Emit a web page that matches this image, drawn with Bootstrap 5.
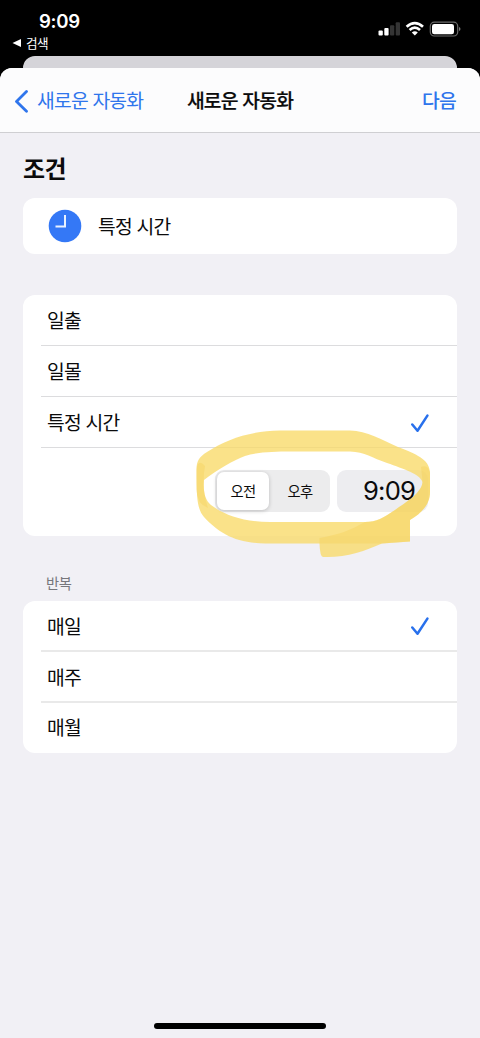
<!DOCTYPE html>
<html lang="ko">
<head>
<meta charset="utf-8">
<meta name="viewport" content="width=device-width, initial-scale=1">
<title>새로운 자동화</title>
<link href="https://cdn.jsdelivr.net/npm/bootstrap@5.3.0/dist/css/bootstrap.min.css" rel="stylesheet">
<style>
body{background:#000;color:#0b0b0c;font-family:"Noto Sans CJK KR",sans-serif;font-size:19.3px;letter-spacing:-.8px;line-height:1.2}
.screen{width:480px;height:1038px}
.status{height:56px;padding:11px 19px 0 12px}
.clock{font:600 18.6px/20px Inter,sans-serif;letter-spacing:-.3px;padding-left:27px}
.back-app{font-size:12.6px;line-height:16px;letter-spacing:-.6px;padding-top:4px}
.behind{height:12px;margin:0 23px;background:#d5d4d9;border-radius:12px 12px 0 0}
.sheet{background:#f1f0f5;border-radius:12px 12px 0 0}
.topbar{height:65px;background:#fcfcfd;border-bottom:1px solid #cfcfd2;padding:1px 24px 0 14px}
.blue{color:#2f75ec}
.heading{font-weight:500;-webkit-text-stroke:.2px}
.next{font-weight:500}
.body-area{padding:0 23px}
.page-title{font-size:24px;line-height:30px;letter-spacing:-.5px;margin:20px 0 15px}
.panel{border-radius:12px;background:#fff}
.trigger{height:56px;padding-left:25px;gap:16px}
.trigger span{padding-top:1px}
.choices{margin-top:41px;height:241px}
.choice{height:51px;margin-left:18px;padding:2px 28px 0 6px;border-bottom:1px solid #dcdcde}
.repeat .choice{border-bottom:2px solid #e9e9e9}
.repeat .choice:last-child{height:50px;border-bottom:0;padding-top:0}
.picker{height:88px;padding:0 29px 2px 0;gap:7px}
.segments{width:115px;height:42px;background:#ececed;border-radius:9px;padding:2px;font-size:14.3px;letter-spacing:-.6px}
.segment{width:57px;padding-bottom:1px}
.segment.active{width:53px;background:#fff;border-radius:7px;box-shadow:0 1px 4px #0003}
.segment:last-child{margin-left:3px}
.time{width:91px;height:42px;background:#ededf0;border-radius:9px;font:400 25.6px/41px Inter,sans-serif;letter-spacing:-.8px;padding-left:26px}
.marker{left:190px;top:422px;pointer-events:none}
.group-label{color:#77777c;font-size:14.3px;line-height:18px;letter-spacing:-.5px;margin:38px 0 9px 23px}
.home-bar{width:172px;height:6px;border-radius:3px;background:#000;margin-bottom:9px}
</style>
</head>
<body>
<div class="screen position-relative d-flex flex-column overflow-hidden">
  <header class="status d-flex justify-content-between text-white">
    <div>
      <div class="clock">9:09</div>
      <div class="back-app d-flex align-items-center gap-1"><svg width="10" height="8"><path d="M.5 4 9 0v8z" fill="#fff"/></svg>검색</div>
    </div>
    <svg class="mt-2" width="84" height="22" viewBox="0 0 84 22">
      <g fill="#fff"><rect x="1.5" y="11.5" width="4.3" height="5" rx="1"/><rect x="7.3" y="9" width="4.3" height="7.5" rx="1"/></g>
      <g fill="#343434"><rect x="13" y="6.3" width="4.3" height="10.2" rx="1"/><rect x="18.7" y="3.3" width="4.3" height="13.2" rx="1"/></g>
      <g fill="none" stroke="#fff" stroke-width="2.7"><path d="M29.6 7.8q8.2-7.2 16.4 0M32.6 11q5.2-4.6 10.4 0"/></g>
      <path d="M34.8 13.4q3-2.4 6 0l-3 3.2z" fill="#fff"/>
      <rect x="53.3" y="3.2" width="27.4" height="13.8" rx="4" fill="none" stroke="#6b6b6b" stroke-width="1.2"/>
      <rect x="55" y="5" width="22" height="10.2" rx="2.3" fill="#fff"/><path d="M82 8q1.5.4 1.5 2t-1.5 2z" fill="#777"/>
    </svg>
  </header>
  <div class="behind"></div>
  <main class="sheet flex-grow-1 d-flex flex-column overflow-hidden">
    <nav class="topbar position-relative d-flex align-items-center justify-content-between">
      <a class="blue text-decoration-none d-flex align-items-center" href="#"><svg class="me-2" width="15" height="24" viewBox="0 0 15 24"><path d="M12.5 2.5 2.5 12.5l10 9.8" fill="none" stroke="#2f75ec" stroke-width="2.8" stroke-linecap="round" stroke-linejoin="round"/></svg>새로운 자동화</a>
      <span class="heading position-absolute start-50 translate-middle-x">새로운 자동화</span>
      <a class="blue next text-decoration-none" href="#">다음</a>
    </nav>
    <div class="body-area">
      <h1 class="page-title fw-bold">조건</h1>
      <section class="panel trigger d-flex align-items-center">
        <svg width="34" height="34" viewBox="0 0 34 34"><circle cx="17" cy="17" r="16.3" fill="#3478f6"/><path d="M17 6v11.4H7.5" fill="none" stroke="#e9f2ff" stroke-width="2"/></svg>
        <span>특정 시간</span>
      </section>
      <section class="panel choices">
        <div class="choice d-flex align-items-center">일출</div>
        <div class="choice d-flex align-items-center">일몰</div>
        <div class="choice d-flex align-items-center justify-content-between">특정 시간<svg width="18" height="19" viewBox="0 0 18 19"><path d="m1.3 10.5 5.2 6.3L16.4 1.6" fill="none" stroke="#2870ec" stroke-width="2.5" stroke-linecap="round" stroke-linejoin="round"/></svg></div>
        <div class="picker d-flex align-items-center justify-content-end">
          <div class="segments d-flex"><div class="segment active d-flex align-items-center justify-content-center">오전</div><div class="segment d-flex align-items-center justify-content-center">오후</div></div>
          <div class="time">9:09</div>
        </div>
      </section>
      <div class="group-label">반복</div>
      <section class="panel repeat">
        <div class="choice d-flex align-items-center justify-content-between">매일<svg width="18" height="19" viewBox="0 0 18 19"><path d="m1.3 10.5 5.2 6.3L16.4 1.6" fill="none" stroke="#2870ec" stroke-width="2.5" stroke-linecap="round" stroke-linejoin="round"/></svg></div>
        <div class="choice d-flex align-items-center">매주</div>
        <div class="choice d-flex align-items-center">매월</div>
      </section>
    </div>
    <div class="home-bar mt-auto mx-auto"></div>
  </main>
  <!-- highlighter stroke around the time picker -->
  <svg class="marker position-absolute" width="250" height="140" viewBox="190 422 250 140">
    <path fill="#f9da68" fill-opacity=".78" fill-rule="evenodd" d="M196.5 470C196.5 461 199 457 207 452C227 439 250 431 280 430.500H350C367 431 382 440 398 447C416 454 429 459 430 472V492C430 504 422 513 410 520V541.500L382 543.500C365 551 345 558 323 557Q320 557 319.500 543.500H265C235 543 219 533 204 517C197 509 196.500 497 196.500 470ZM204 480C218 469 234 460 245 456C258 452 275 451.500 290 451.500H350C365 452 372 458 387 463C404 469 420 474 422.500 482C422 492 408 501 395 510C383 518 377 522 365 522H270C244 522 224 515 211 505C205 500 203 492 204 480Z"/>
    <path fill="#f4d058" fill-opacity=".38" d="M196.500 470Q198 458 205 466Q203 476 204 490Q205 500 208 508Q197 504 196.500 490ZM421 467Q429 464 430 474V492C430 504 422 513 410 520V541.500L382 543.500H319.500V538C338 535 351 530 365 522C377 522 383 518 395 510C408 501 422 492 422.500 482Q422 475 421 467Z"/>
  </svg>
</div>
<script src="https://cdn.jsdelivr.net/npm/bootstrap@5.3.0/dist/js/bootstrap.bundle.min.js"></script>
</body>
</html>
